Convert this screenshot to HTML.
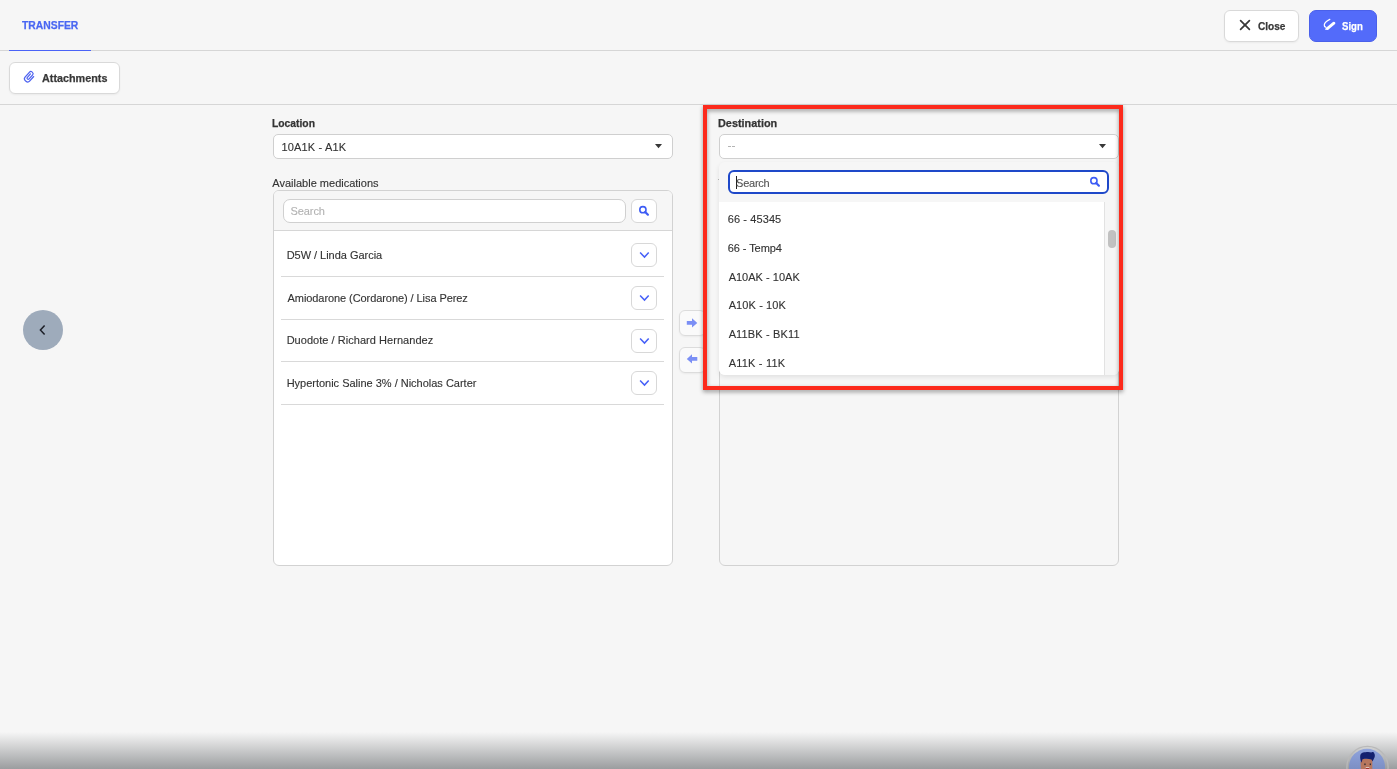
<!DOCTYPE html>
<html><head><meta charset="utf-8">
<style>
*{box-sizing:border-box;margin:0;padding:0}
html,body{width:1397px;height:769px;overflow:hidden;background:#f6f6f6;font-family:"Liberation Sans",sans-serif;color:#333}
.abs{position:absolute;white-space:nowrap}
.t{position:absolute;white-space:nowrap;line-height:14px}
.hline{position:absolute;left:0;width:1397px;height:1px;background:#d6d6d6}
.btn{position:absolute;background:#fff;border:1px solid #d9d9d9;border-radius:6px;box-shadow:0 1px 2px rgba(0,0,0,0.05)}
.sel{position:absolute;background:#fff;border:1px solid #cfcfcf;border-radius:5px}
.panel{position:absolute;border:1px solid #d2d2d2;border-radius:6px}
.sep{position:absolute;left:281px;width:383px;height:1px;background:#d9d9d9}
.chev{position:absolute;left:631px;width:26px;height:24px;background:#fff;border:1px solid #d8d8d8;border-radius:6px}
</style></head><body>
<div id="root" style="position:absolute;left:0;top:0;width:1397px;height:769px;will-change:transform">

<!-- header -->
<div class="hline" style="top:50px"></div>
<div class="abs" style="left:9px;top:50px;width:82px;height:1px;background:#4a63f7"></div>

<div class="btn" style="left:1224px;top:10px;width:75px;height:32px"></div>
<svg class="abs" style="left:1236px;top:16px" width="18" height="18" viewBox="0 0 18 18"><path d="M4.6 4.6L13.4 13.4" stroke="#383838" stroke-width="1.7" stroke-linecap="round"/><path d="M13.4 4.6L4.6 13.4" stroke="#383838" stroke-width="1.7" stroke-linecap="round"/></svg>

<div class="abs" style="left:1309px;top:10px;width:68px;height:32px;background:#536bfa;border:1px solid #4a60ea;border-radius:7px"></div>
<svg class="abs" style="left:1318px;top:14px" width="24" height="22" viewBox="0 0 24 22"><path d="M11.8 5.4C9 6.8 6.4 8.8 6.3 11C6.2 12.3 6.7 13 7.7 13.2" stroke="#fff" stroke-width="1.25" fill="none" stroke-linecap="round"/><path d="M9.6 14.4L15.9 9.2" stroke="#fff" stroke-width="2.9" stroke-linecap="round"/><path d="M7.2 16L7.9 12.9L10.6 15.4Z" fill="#fff"/></svg>

<!-- toolbar -->
<div class="btn" style="left:9px;top:62px;width:111px;height:32px"></div>
<svg class="abs" style="left:18px;top:66px" width="24" height="22" viewBox="0 0 24 22"><g transform="translate(11.3 10.9) rotate(42) scale(0.64 0.54) translate(-12.5 -12)"><path d="M17.25 6V17.5A4.75 4.75 0 0 1 7.75 17.5V5A3.25 3.25 0 0 1 14.25 5V15.5A1.75 1.75 0 0 1 10.75 15.5V6.5" stroke="#4e63f0" stroke-width="2.0" fill="none" stroke-linecap="round"/></g></svg>
<div class="hline" style="top:104px"></div>

<!-- left side -->
<div class="sel" style="left:273px;top:134px;width:400px;height:25px"></div>
<svg class="abs" style="left:655px;top:144px" width="7" height="5" viewBox="0 0 7 5"><path d="M0 0H7L3.5 4.2Z" fill="#383838"/></svg>

<div class="panel" style="left:273px;top:190px;width:400px;height:376px;background:#fff;overflow:hidden">
  <div class="abs" style="left:0;top:0;width:398px;height:40px;background:#f6f6f6;border-bottom:1px solid #d6d6d6"></div>
</div>
<div class="sel" style="left:283px;top:199px;width:343px;height:24px;border-radius:7px;border-color:#d0d0d0"></div>
<div class="chev" style="top:199px"></div>
<svg class="abs" style="left:638px;top:205px" width="12" height="12" viewBox="0 0 12 12"><circle cx="4.9" cy="4.7" r="3.1" stroke="#3d5cf5" stroke-width="1.6" fill="none"/><path d="M7.2 7L9.9 9.7" stroke="#3d5cf5" stroke-width="2.2" stroke-linecap="round"/></svg>

<div class="sep" style="top:276px"></div>
<div class="sep" style="top:319px"></div>
<div class="sep" style="top:361px"></div>
<div class="sep" style="top:404px"></div>

<div class="chev" style="top:243px"></div>
<div class="chev" style="top:286px"></div>
<div class="chev" style="top:329px"></div>
<div class="chev" style="top:371px"></div>
<svg class="abs" style="left:639px;top:251px" width="11" height="8" viewBox="0 0 11 8"><path d="M1.1 1.5L5.5 6.1L9.7 1.5" stroke="#4660f8" stroke-width="1.5" fill="none"/></svg>
<svg class="abs" style="left:639px;top:294px" width="11" height="8" viewBox="0 0 11 8"><path d="M1.1 1.5L5.5 6.1L9.7 1.5" stroke="#4660f8" stroke-width="1.5" fill="none"/></svg>
<svg class="abs" style="left:639px;top:337px" width="11" height="8" viewBox="0 0 11 8"><path d="M1.1 1.5L5.5 6.1L9.7 1.5" stroke="#4660f8" stroke-width="1.5" fill="none"/></svg>
<svg class="abs" style="left:639px;top:379px" width="11" height="8" viewBox="0 0 11 8"><path d="M1.1 1.5L5.5 6.1L9.7 1.5" stroke="#4660f8" stroke-width="1.5" fill="none"/></svg>

<!-- transfer arrows -->
<div class="btn" style="left:679px;top:310px;width:27px;height:26px;border-color:#dcdcdc;border-radius:6px;background:#fafafa"></div>
<div class="btn" style="left:679px;top:347px;width:27px;height:26px;border-color:#dcdcdc;border-radius:6px;background:#fafafa"></div>
<svg class="abs" style="left:686px;top:318px" width="12" height="10" viewBox="0 0 12 10"><path d="M0.8 3.1H6V0.3L11.3 4.9L6 9.5V6.8H0.8Z" fill="#7b8ff5"/></svg>
<svg class="abs" style="left:686px;top:354px" width="12" height="10" viewBox="0 0 12 10"><path d="M11.3 3.1H6V0.3L0.8 4.9L6 9.5V6.8H11.3Z" fill="#7b8ff5"/></svg>

<!-- right side -->
<div class="panel" style="left:719px;top:190px;width:400px;height:376px;background:#f6f6f6"></div>
<div class="sel" style="left:719px;top:134px;width:400px;height:25px"></div>
<svg class="abs" style="left:1099px;top:144px" width="7" height="5" viewBox="0 0 7 5"><path d="M0 0H7L3.5 4.2Z" fill="#383838"/></svg>

<!-- dropdown -->
<div class="abs" style="left:719px;top:162px;width:400px;height:213px;background:#f6f6f6;border-radius:6px;box-shadow:0 2px 5px rgba(0,0,0,0.09);overflow:hidden">
  <div class="abs" style="left:0;top:40px;width:385px;height:173px;background:#fff"></div>
  <div class="abs" style="left:385px;top:40px;width:15px;height:173px;background:#f6f6f6;border-left:1px solid #e2e2e2"></div>
  <div class="abs" style="left:389px;top:68px;width:8px;height:18px;background:#c1c1c1;border-radius:4px"></div>
</div>
<div class="abs" style="left:728px;top:170px;width:381px;height:24px;background:#fff;border:2px solid #1e48c9;border-radius:6px"></div>
<div class="abs" style="left:736px;top:176px;width:1px;height:13px;background:#222"></div>
<svg class="abs" style="left:1089px;top:176px" width="12" height="12" viewBox="0 0 12 12"><circle cx="4.9" cy="4.7" r="3.1" stroke="#3d5cf5" stroke-width="1.6" fill="none"/><path d="M7.2 7L9.9 9.7" stroke="#3d5cf5" stroke-width="2.2" stroke-linecap="round"/></svg>


<div class="abs" style="left:728px;top:146px;width:3px;height:1px;background:#b4b4b4"></div>
<div class="abs" style="left:732px;top:146px;width:3px;height:1px;background:#b4b4b4"></div>
<div class="abs" style="left:718px;top:179px;width:1px;height:1px;background:#b0b0b0"></div>
<div class="t" id="transfer" style="left:22.0px;top:18px;font-size:11.5px;color:#4a67f2;letter-spacing:0.000px;font-weight:bold;-webkit-text-stroke:0.25px;transform:scaleX(0.9000);transform-origin:0 0">TRANSFER</div>
<div class="t" id="close" style="left:1258.37px;top:19px;font-size:11.5px;color:#383838;letter-spacing:0.000px;font-weight:bold;-webkit-text-stroke:0.25px;transform:scaleX(0.8775);transform-origin:0 0">Close</div>
<div class="t" id="sign" style="left:1342.45px;top:19px;font-size:11.5px;color:#fff;letter-spacing:0.000px;font-weight:bold;-webkit-text-stroke:0.25px;transform:scaleX(0.8348);transform-origin:0 0">Sign</div>
<div class="t" id="attach" style="left:42.0px;top:71px;font-size:11.5px;color:#383838;letter-spacing:0.000px;font-weight:bold;-webkit-text-stroke:0.25px;transform:scaleX(0.9387);transform-origin:0 0">Attachments</div>
<div class="t" id="loc" style="left:272.37px;top:116px;font-size:11.5px;color:#333;letter-spacing:0.000px;font-weight:bold;-webkit-text-stroke:0.25px;transform:scaleX(0.8959);transform-origin:0 0">Location</div>
<div class="t" id="locval" style="left:281.56px;top:140px;font-size:11px;color:#333;letter-spacing:0.144px;-webkit-text-stroke:0.12px">10A1K - A1K</div>
<div class="t" id="avail" style="left:272.37px;top:176px;font-size:11px;color:#333;letter-spacing:-0.000px;-webkit-text-stroke:0.12px">Available medications</div>
<div class="t" id="lsearch" style="left:290.38px;top:204px;font-size:11px;color:#b3b3b3;letter-spacing:-0.054px;-webkit-text-stroke:0.12px">Search</div>
<div class="t" id="r1" style="left:286.64px;top:248px;font-size:11px;color:#333;letter-spacing:-0.023px;-webkit-text-stroke:0.12px">D5W / Linda Garcia</div>
<div class="t" id="r2" style="left:287.54px;top:291px;font-size:11px;color:#333;letter-spacing:-0.073px;-webkit-text-stroke:0.12px">Amiodarone (Cordarone) / Lisa Perez</div>
<div class="t" id="r3" style="left:286.64px;top:333px;font-size:11px;color:#333;letter-spacing:0.041px;-webkit-text-stroke:0.12px">Duodote / Richard Hernandez</div>
<div class="t" id="r4" style="left:286.64px;top:376px;font-size:11px;color:#333;letter-spacing:-0.009px;-webkit-text-stroke:0.12px">Hypertonic Saline 3% / Nicholas Carter</div>
<div class="t" id="dest" style="left:718.37px;top:116px;font-size:11.5px;color:#333;letter-spacing:0.000px;font-weight:bold;-webkit-text-stroke:0.25px;transform:scaleX(0.9451);transform-origin:0 0">Destination</div>
<div class="t" id="dsearch" style="left:736.1px;top:176px;font-size:11px;color:#555;letter-spacing:-0.252px;-webkit-text-stroke:0.12px">Search</div>
<div class="t" id="i1" style="left:727.73px;top:212px;font-size:11px;color:#333;letter-spacing:0.100px;-webkit-text-stroke:0.12px">66 - 45345</div>
<div class="t" id="i2" style="left:727.73px;top:241px;font-size:11px;color:#333;letter-spacing:-0.070px;-webkit-text-stroke:0.12px">66 - Temp4</div>
<div class="t" id="i3" style="left:728.63px;top:270px;font-size:11px;color:#333;letter-spacing:0.021px;-webkit-text-stroke:0.12px">A10AK - 10AK</div>
<div class="t" id="i4" style="left:728.63px;top:298px;font-size:11px;color:#333;letter-spacing:0.110px;-webkit-text-stroke:0.12px">A10K - 10K</div>
<div class="t" id="i5" style="left:728.63px;top:327px;font-size:11px;color:#333;letter-spacing:0.154px;-webkit-text-stroke:0.12px">A11BK - BK11</div>
<div class="t" id="i6" style="left:728.63px;top:356px;font-size:11px;color:#333;letter-spacing:0.210px;-webkit-text-stroke:0.12px">A11K - 11K</div>

<!-- red highlight -->
<div class="abs" style="left:703px;top:105px;width:420px;height:285px;border:4px solid #fc2a1c;filter:drop-shadow(0.5px 2px 2px rgba(0,0,0,0.38))"></div>

<!-- back circle -->
<div class="abs" style="left:23px;top:310px;width:40px;height:40px;border-radius:50%;background:#9eabbb"></div>
<svg class="abs" style="left:38px;top:324px" width="9" height="12" viewBox="0 0 9 12"><path d="M6.6 1.4L2.4 6L6.6 10.5" stroke="#1c1f27" stroke-width="1.5" fill="none"/></svg>

<!-- bottom gradient -->
<div class="abs" style="left:0;top:732px;width:1397px;height:37px;background:linear-gradient(#f6f6f6,#9b9d9f)"></div>
<svg class="abs" style="left:1340px;top:740px" width="57" height="29" viewBox="0 0 57 29">
<defs><linearGradient id="av" x1="0" y1="0" x2="0" y2="1"><stop offset="0" stop-color="#8fa3dd"/><stop offset="1" stop-color="#6d7fb0"/></linearGradient></defs>
<circle cx="27.5" cy="27" r="20.6" fill="none" stroke="#b9b9b9" stroke-width="1.3"/>
<circle cx="27" cy="26.8" r="18" fill="url(#av)"/>
<path d="M20.6 23.5C20 21.5 21.4 20.6 22.2 21.2L22.2 29H20.8Z" fill="#b7765d"/>
<path d="M22 18.5H32.3V29H22Z" fill="#b7765d"/>
<path d="M20.2 16.5C20.2 13 23 12 25.5 12.2C28 11.8 30 12 31.5 12.5C32 12 33.5 11.8 34.2 13.2C35.2 14.8 35 17 34 18.5L32.5 21.5L31.5 19.5C28 18.5 25 18.8 22.5 19.2L21.5 22.8C20.5 20.5 20 18 20.2 16.5Z" fill="#14206f"/>
<rect x="24.3" y="23.5" width="1.3" height="1.6" fill="#2d2a33"/>
<rect x="29.7" y="23.5" width="1.3" height="1.6" fill="#2d2a33"/>
<rect x="25.8" y="27" width="3.4" height="0.9" fill="#e8e2e0"/>
<rect x="26" y="27.9" width="3" height="1.2" fill="#a8302e"/>
</svg>

</div>
</body></html>
